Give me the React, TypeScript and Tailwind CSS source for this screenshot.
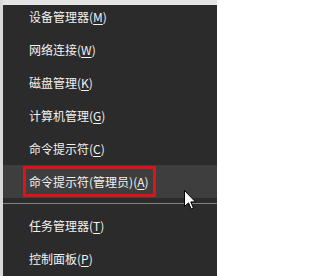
const items = [
  { label: '设备管理器', key: 'M' },
  { label: '网络连接', key: 'W' },
  { label: '磁盘管理', key: 'K' },
  { label: '计算机管理', key: 'G' },
  { label: '命令提示符', key: 'C' },
];

const lower = [
  { label: '任务管理器', key: 'T' },
  { label: '控制面板', key: 'P' },
];

function Label({ label, k }: { label: string; k: string }) {
  return (
    <span className="whitespace-nowrap">
      {label}(<span className="underline underline-offset-2">{k}</span>)
    </span>
  );
}

export default function App() {
  return (
    <div
      className="relative flex w-[217px] h-[276px] overflow-hidden bg-[#2b2b2b] text-[12px] text-[#f2f2f2]"
      style={{ fontFamily: '"Noto Sans CJK SC", "Noto Sans", sans-serif' }}
    >
      {/* left edge of the desktop behind */}
      <div className="w-[3px] shrink-0 bg-[#d9d9d9]" />

      <div className="flex-1 flex flex-col">
        {/* cut-off strip at the top */}
        <div className="h-[5px] shrink-0 bg-[#e4e4e4]" />

        {items.map((it, i) => (
          <div
            key={it.key}
            className={`flex items-center pl-[26px] shrink-0 ${i === 0 ? 'h-[28px] pb-[4px]' : 'h-[33px]'}`}
          >
            <Label label={it.label} k={it.key} />
          </div>
        ))}

        {/* highlighted row */}
        <div className="flex items-center h-[33px] shrink-0 pl-[20px] bg-[#3e3e3e]">
          <div className="flex items-center w-[133px] h-[31px] pl-[3px] border-[3px] border-[#e3101a]">
            <Label label="命令提示符(管理员)" k="A" />
          </div>
        </div>

        <div className="flex items-center h-[11px] shrink-0">
          <div className="w-full h-px bg-[#808080]" />
        </div>

        {lower.map(it => (
          <div key={it.key} className="flex items-center h-[33px] shrink-0 pl-[26px]">
            <Label label={it.label} k={it.key} />
          </div>
        ))}
      </div>

      {/* mouse pointer */}
      <svg viewBox="0 0 12 20" className="absolute left-[184px] top-[190px] w-[12px] h-[20px]">
        <path
          d="M0.5 0.5 L0.5 16.5 L4.5 12.8 L7.2 19 L9.4 18 L6.8 11.9 L11.5 11.9 Z"
          fill="#ffffff"
          stroke="#000000"
          strokeWidth="1"
          strokeLinejoin="round"
        />
      </svg>
    </div>
  );
}
